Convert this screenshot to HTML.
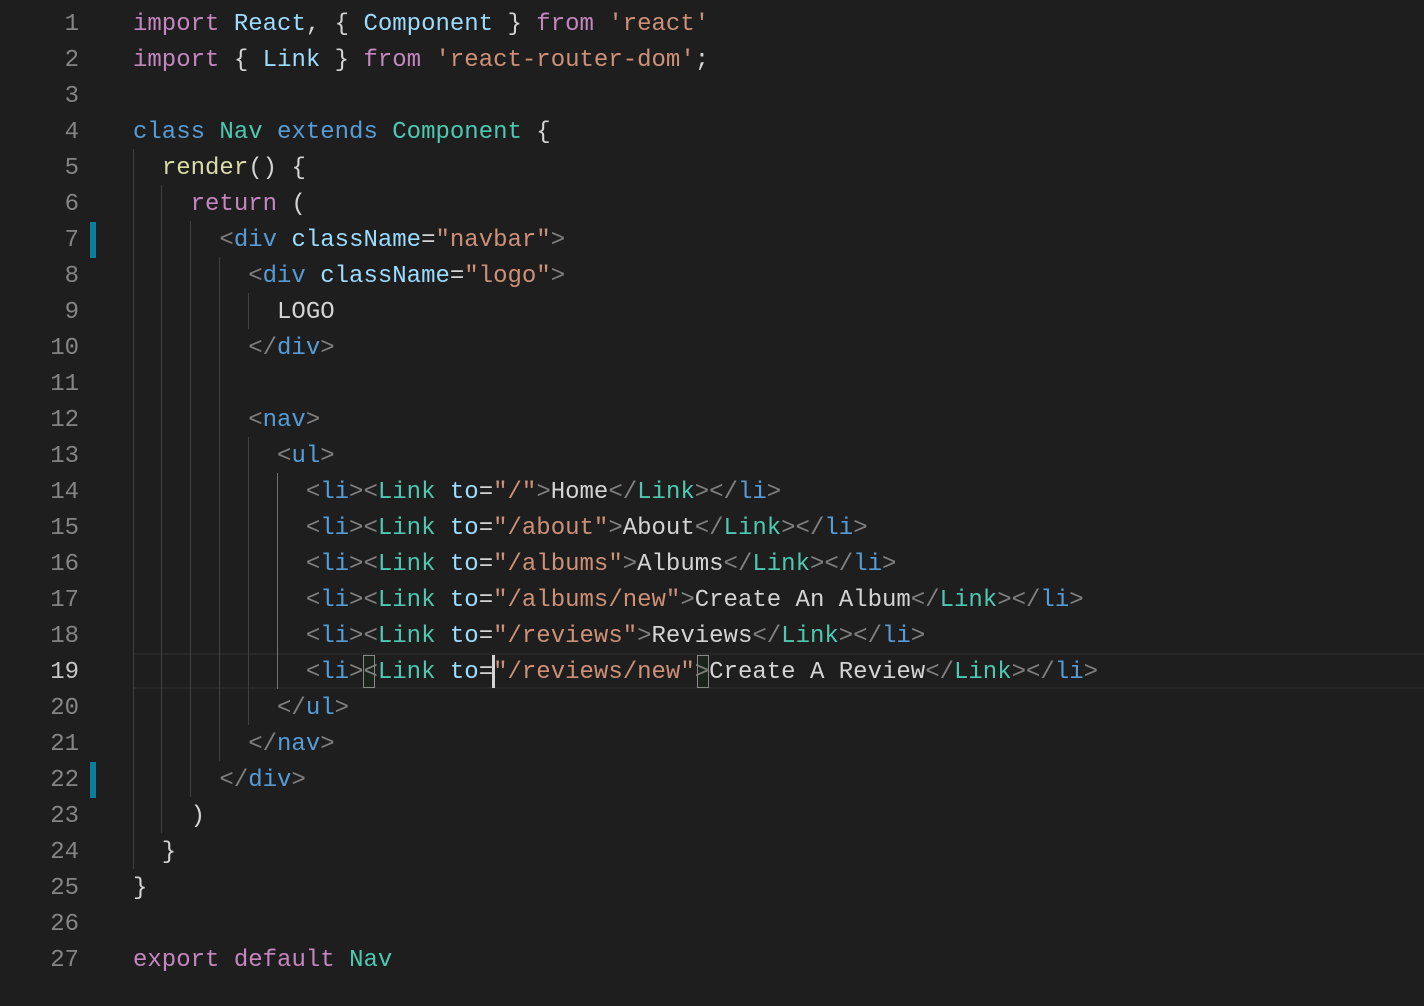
<!DOCTYPE html>
<html><head><meta charset="utf-8"><style>
html,body{margin:0;padding:0;background:#1e1e1e;width:1424px;height:1006px;overflow:hidden}
.ln{position:absolute;left:0;width:79px;text-align:right;font:24px/36px "Liberation Mono",monospace;color:#858585}
.cd{position:absolute;left:133px;font:24px/36px "Liberation Mono",monospace;color:#d4d4d4;white-space:pre}
.k{color:#c586c0}.v{color:#9cdcfe}.s{color:#ce9178}.b{color:#569cd6}.t{color:#4ec9b0}.f{color:#dcdcaa}.g{color:#808080}
.gd{position:absolute;width:1px;background:#404040}
.bm{position:absolute;width:12px;height:33px;border:1px solid #888;box-sizing:border-box;background:rgba(0,100,0,.1)}
</style></head><body>
<div style="position:absolute;left:133px;top:653px;width:1291px;height:36px;border-top:2px solid #282828;border-bottom:2px solid #282828;box-sizing:border-box"></div>
<div style="position:absolute;left:90px;top:222px;width:6px;height:36px;background:#0c7d9d"></div>
<div style="position:absolute;left:90px;top:762px;width:6px;height:36px;background:#0c7d9d"></div>
<div class="gd" style="left:133px;top:149px;height:720px"></div>
<div class="gd" style="left:161px;top:185px;height:648px"></div>
<div class="gd" style="left:190px;top:221px;height:576px"></div>
<div class="gd" style="left:219px;top:257px;height:504px"></div>
<div class="gd" style="left:248px;top:293px;height:36px"></div>
<div class="gd" style="left:248px;top:437px;height:288px"></div>
<div class="gd" style="left:277px;top:473px;height:216px;background:#707070"></div>
<div class="bm" style="left:363px;top:655px"></div>
<div class="bm" style="left:697px;top:655px"></div>
<div style="position:absolute;left:492px;top:655px;width:3px;height:33px;background:#d4d4d4"></div>
<div id="g"></div>
<script>
var L=[
'<span class="k">import</span> <span class="v">React</span>, { <span class="v">Component</span> } <span class="k">from</span> <span class="s">\'react\'</span>',
'<span class="k">import</span> { <span class="v">Link</span> } <span class="k">from</span> <span class="s">\'react-router-dom\'</span>;',
'',
'<span class="b">class</span> <span class="t">Nav</span> <span class="b">extends</span> <span class="t">Component</span> {',
'  <span class="f">render</span>() {',
'    <span class="k">return</span> (',
'      <span class="g">&lt;</span><span class="b">div</span> <span class="v">className</span>=<span class="s">"navbar"</span><span class="g">&gt;</span>',
'        <span class="g">&lt;</span><span class="b">div</span> <span class="v">className</span>=<span class="s">"logo"</span><span class="g">&gt;</span>',
'          LOGO',
'        <span class="g">&lt;/</span><span class="b">div</span><span class="g">&gt;</span>',
'',
'        <span class="g">&lt;</span><span class="b">nav</span><span class="g">&gt;</span>',
'          <span class="g">&lt;</span><span class="b">ul</span><span class="g">&gt;</span>',
'            <span class="g">&lt;</span><span class="b">li</span><span class="g">&gt;&lt;</span><span class="t">Link</span> <span class="v">to</span>=<span class="s">"/"</span><span class="g">&gt;</span>Home<span class="g">&lt;/</span><span class="t">Link</span><span class="g">&gt;&lt;/</span><span class="b">li</span><span class="g">&gt;</span>',
'            <span class="g">&lt;</span><span class="b">li</span><span class="g">&gt;&lt;</span><span class="t">Link</span> <span class="v">to</span>=<span class="s">"/about"</span><span class="g">&gt;</span>About<span class="g">&lt;/</span><span class="t">Link</span><span class="g">&gt;&lt;/</span><span class="b">li</span><span class="g">&gt;</span>',
'            <span class="g">&lt;</span><span class="b">li</span><span class="g">&gt;&lt;</span><span class="t">Link</span> <span class="v">to</span>=<span class="s">"/albums"</span><span class="g">&gt;</span>Albums<span class="g">&lt;/</span><span class="t">Link</span><span class="g">&gt;&lt;/</span><span class="b">li</span><span class="g">&gt;</span>',
'            <span class="g">&lt;</span><span class="b">li</span><span class="g">&gt;&lt;</span><span class="t">Link</span> <span class="v">to</span>=<span class="s">"/albums/new"</span><span class="g">&gt;</span>Create An Album<span class="g">&lt;/</span><span class="t">Link</span><span class="g">&gt;&lt;/</span><span class="b">li</span><span class="g">&gt;</span>',
'            <span class="g">&lt;</span><span class="b">li</span><span class="g">&gt;&lt;</span><span class="t">Link</span> <span class="v">to</span>=<span class="s">"/reviews"</span><span class="g">&gt;</span>Reviews<span class="g">&lt;/</span><span class="t">Link</span><span class="g">&gt;&lt;/</span><span class="b">li</span><span class="g">&gt;</span>',
'            <span class="g">&lt;</span><span class="b">li</span><span class="g">&gt;&lt;</span><span class="t">Link</span> <span class="v">to</span>=<span class="s">"/reviews/new"</span><span class="g">&gt;</span>Create A Review<span class="g">&lt;/</span><span class="t">Link</span><span class="g">&gt;&lt;/</span><span class="b">li</span><span class="g">&gt;</span>',
'          <span class="g">&lt;/</span><span class="b">ul</span><span class="g">&gt;</span>',
'        <span class="g">&lt;/</span><span class="b">nav</span><span class="g">&gt;</span>',
'      <span class="g">&lt;/</span><span class="b">div</span><span class="g">&gt;</span>',
'    )',
'  }',
'}',
'',
'<span class="k">export</span> <span class="k">default</span> <span class="t">Nav</span>'
];
var h='';
for(var i=0;i<L.length;i++){var y=7+36*i;
h+='<div class="ln" style="top:'+y+'px'+(i==18?';color:#c6c6c6':'')+'">'+(i+1)+'</div>';
h+='<div class="cd" style="top:'+y+'px">'+L[i]+'</div>';}
document.getElementById('g').innerHTML=h;
</script>
</body></html>
